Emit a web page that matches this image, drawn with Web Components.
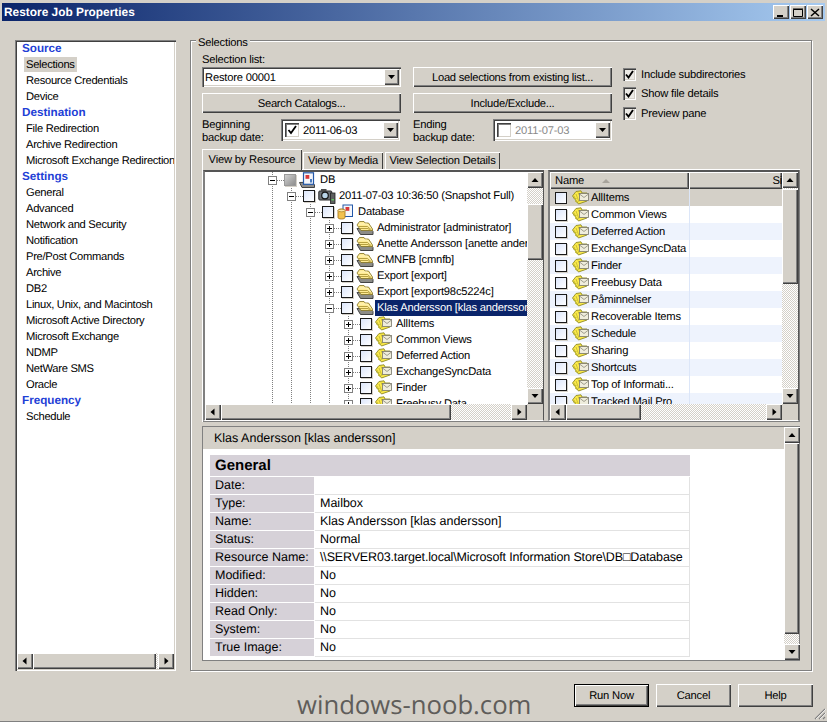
<!DOCTYPE html>
<html lang="en"><head><meta charset="utf-8"><title>Restore Job Properties</title>
<style>
html,body{margin:0;padding:0;background:#d4d0c8}
body{font:11.2px "Liberation Sans",Arial,sans-serif;letter-spacing:-.2px;color:#000;width:827px;height:722px;overflow:hidden;text-rendering:geometricPrecision}
</style></head><body>
<x-dialog>
  <x-titlebar slot="title">Restore Job Properties</x-titlebar>
  <x-nav slot="nav">
    <x-nav-head>Source</x-nav-head>
    <x-nav-item selected>Selections</x-nav-item>
    <x-nav-item>Resource Credentials</x-nav-item>
    <x-nav-item>Device</x-nav-item>
    <x-nav-head>Destination</x-nav-head>
    <x-nav-item>File Redirection</x-nav-item>
    <x-nav-item>Archive Redirection</x-nav-item>
    <x-nav-item>Microsoft Exchange Redirection</x-nav-item>
    <x-nav-head>Settings</x-nav-head>
    <x-nav-item>General</x-nav-item>
    <x-nav-item>Advanced</x-nav-item>
    <x-nav-item>Network and Security</x-nav-item>
    <x-nav-item>Notification</x-nav-item>
    <x-nav-item>Pre/Post Commands</x-nav-item>
    <x-nav-item>Archive</x-nav-item>
    <x-nav-item>DB2</x-nav-item>
    <x-nav-item>Linux, Unix, and Macintosh</x-nav-item>
    <x-nav-item>Microsoft Active Directory</x-nav-item>
    <x-nav-item>Microsoft Exchange</x-nav-item>
    <x-nav-item>NDMP</x-nav-item>
    <x-nav-item>NetWare SMS</x-nav-item>
    <x-nav-item>Oracle</x-nav-item>
    <x-nav-head>Frequency</x-nav-head>
    <x-nav-item>Schedule</x-nav-item>
  </x-nav>
  <x-selections slot="main"></x-selections>
  <x-btn slot="footer" default>Run Now</x-btn>
  <x-btn slot="footer">Cancel</x-btn>
  <x-btn slot="footer">Help</x-btn>
</x-dialog>
<script>
const RAISED='box-shadow:inset 1px 1px #fff,inset -1px -1px #404040,inset -2px -2px #808080;';
const SUNKEN='box-shadow:inset 1px 1px #808080,inset 2px 2px #404040,inset -1px -1px #fff,inset -2px -2px #d4d0c8;';
function def(name,css,html,init){
  customElements.define(name,class extends HTMLElement{
    constructor(){super();this.attachShadow({mode:'open'});}
    connectedCallback(){
      if(this._d)return;this._d=1;
      const h=typeof html==='function'?html(this):html;
      this.shadowRoot.innerHTML='<style>'+css+'</style>'+h;
      if(init)init(this);
    }
  });
}
const ICONS={
 stack:`<path d="M1 8.500L4.500 14.500H17V11.500L14 8z" fill="#8c8c87" stroke="#444" stroke-width="1"/>
  <path d="M1 5L3.500 1.500H8L9 3h3.500L16.500 9v1.500H5z" fill="#ffeb93" stroke="#80701f" stroke-width=".8"/>
  <path d="M2.500 6.500H11.500L15.500 10M3.500 8.500H12L15 11" fill="none" stroke="#a58e2c" stroke-width=".8"/>
  <path d="M3 4h8l3.500 4" fill="none" stroke="#fff8cc" stroke-width=".8"/>`,
 mail:`<path d="M.5 6L4 1.500L9 .8L10 3h5v8l-8.500 3z" fill="#fbe94a" stroke="#8f8a22" stroke-width=".9"/>
  <path d="M2 6l3 7M4 4l3 8M6 2.500l1.500 3M1.500 8.500h3M3 11.500h2.500" stroke="#bdb530" stroke-width=".8" fill="none"/>
  <rect x="7.500" y="3.500" width="9" height="7" fill="#efeddc" stroke="#77756a" stroke-width=".8"/>
  <path d="M7.500 4l4.500 3.500L16.500 4" fill="none" stroke="#8a8878" stroke-width=".8"/>`,
 server:`<path d="M.5 10.500l2.500 5h12.500v-2.500l-2-3z" fill="#8d8d8d" stroke="#333" stroke-width=".9"/>
  <rect x="4.500" y=".8" width="10" height="11.500" fill="#f4f6fb" stroke="#2358a8" stroke-width="1.200"/>
  <rect x="6.500" y="3" width="3.800" height="3.800" fill="#d8383a"/><rect x="11" y="7" width="2" height="3.500" fill="#4a7cc0"/>`,
 camera:`<rect x=".8" y="3" width="13" height="9" rx="1" fill="#6d7176" stroke="#2a2a2a" stroke-width="1"/>
  <rect x="3" y="1" width="5.500" height="2.500" fill="#4b4b4b"/>
  <circle cx="7" cy="7.500" r="3.300" fill="#b9d4e8" stroke="#151515" stroke-width="1.200"/>
  <rect x="12.500" y="5" width="4.500" height="10.500" fill="#5d5f5f" stroke="#222" stroke-width=".8"/>
  <rect x="13.500" y="11" width="2.500" height="1.500" fill="#5fc25f"/>`,
 database:`<rect x="6" y="1" width="9.500" height="11.500" fill="#f4f6fb" stroke="#2358a8"/>
  <rect x="8.500" y="3" width="3.800" height="3.800" fill="#d8383a"/>
  <path d="M1 6.500c0-2 7-2 7 0v7c0 2-7 2-7 0z" fill="#f2c14e" stroke="#a87a20" stroke-width=".9"/>
  <ellipse cx="4.500" cy="6.500" rx="3.500" ry="1.300" fill="#fbe9a8" stroke="#a87a20" stroke-width=".7"/>`
};
def('x-icon',':host{display:block;width:18px;height:16px;flex:none}svg{display:block}',
  e=>`<svg width="18" height="16" viewBox="0 0 18 16" aria-hidden="true">${ICONS[e.getAttribute('name')]||''}</svg>`);

def('x-dialog',`:host{display:flex;flex-direction:column;width:827px;height:722px;box-sizing:border-box;padding-top:3px;border-bottom:1px solid #808080;position:relative;background:#d4d0c8}
 .main{display:flex;gap:14px;margin:19px 0 0 15px;height:631px}
 .foot{display:flex;gap:7px;justify-content:flex-end;margin:13px 14px 0 0}
 .wm{position:absolute;left:297px;top:689px;font:25.700px/32px "Open Sans",sans-serif;letter-spacing:0;color:#5f5d5a;white-space:nowrap}
 svg{position:absolute;right:1px;bottom:1px}`,
 `<slot name="title"></slot><div class="main"><slot name="nav"></slot><slot name="main"></slot></div>
  <div class="foot"><slot name="footer"></slot></div>
  <div class="wm">windows-noob.com</div>
  <svg width="12" height="12" viewBox="0 0 12 12" aria-hidden="true"><path d="M11 1L1 11M11 5L5 11M11 9L9 11" stroke="#808080" stroke-width="1.200"/><path d="M12 1L2 11M12 5L6 11" stroke="#fff" stroke-width=".7"/></svg>`);

def('x-titlebar',`:host{display:flex;align-items:center;justify-content:space-between;height:18px;margin:0 2px;background:linear-gradient(90deg,#0a246a,#a6caf0);color:#fff;font:bold 11.900px "Liberation Sans",sans-serif;letter-spacing:0;padding:0 2px;box-sizing:border-box}
 .b{display:flex}.w{display:flex;width:16px;height:14px;background:#d4d0c8;${RAISED}align-items:center;justify-content:center}
 .w+.w{margin-left:1px}`,
 `<slot></slot><div class="b">
 <span class="w"><svg width="10" height="9"><path d="M1 8h6" stroke="#000" stroke-width="2"/></svg></span>
 <span class="w"><svg width="10" height="9"><path d="M.5 1.500h9v7h-9z" fill="none" stroke="#000"/><path d="M0 1h10" stroke="#000"/></svg></span>
 <span class="w"><svg width="10" height="9"><path d="M1 1l8 7M9 1L1 8" stroke="#000" stroke-width="1.500"/></svg></span></div>`);

def('x-scroll',`:host{display:flex;background:#d4d0c8}
 :host([v]){flex-direction:column;width:16px}
 :host(:not([v])){height:16px}
 .btn{flex:none;width:16px;height:16px;background:#d4d0c8;${RAISED}display:flex;align-items:center;justify-content:center}
 .tr{background:repeating-conic-gradient(#fff 0 25%,#d4d0c8 0 50%) 0 0/2px 2px}
 .end{flex:1}
 .th{flex:none;background:#d4d0c8;${RAISED}}`,
 e=>{const v=e.hasAttribute('v'),s=+e.getAttribute('start')||0,t=+e.getAttribute('thumb')||0;
   const d=v?'height':'width';
   const a=(p)=>`<span class="btn"><svg width="8" height="8" viewBox="0 0 8 8"><path d="${p}"/></svg></span>`;
   return a(v?'M4 2l3.500 4h-7z':'M5.500 .5v7L1.500 4z')+
   `<div class="tr" style="${d}:${s}px;flex:none"></div><div class="th" style="${d}:${t}px"></div><div class="tr end"></div>`+
   a(v?'M.5 2h7L4 6z':'M2.500 .5v7L6.500 4z');});

def('x-nav',`:host{display:flex;flex-direction:column;width:161px;height:631px;flex:none;background:#fff;position:relative}
 :host::after{content:"";position:absolute;inset:0;${SUNKEN}pointer-events:none}
 .l{flex:1;overflow:hidden;padding-right:2px}
 x-scroll{margin:0 2px 2px}`,
 `<div class="l"><slot></slot></div><x-scroll start="0" thumb="123"></x-scroll>`);
def('x-nav-head',`:host{display:block;height:16px;line-height:18px;padding-left:7px;font-weight:bold;font-size:11.700px;letter-spacing:0;color:#1f3fd6;white-space:nowrap}`,`<slot></slot>`);
def('x-nav-item',`:host{display:block;height:16px;padding-left:9px;white-space:nowrap;letter-spacing:-.3px}
 span{display:inline-block;line-height:17px;height:15px;padding:0 2px;margin-top:1px;vertical-align:top}
 :host([selected]) span{background:#d4d0c8}`,`<span><slot></slot></span>`);

def('x-btn',`:host{display:flex;align-items:center;justify-content:center;box-sizing:border-box;width:75px;height:23px;background:#d4d0c8;${RAISED}white-space:nowrap}
 :host([default]){outline:1px solid #000;outline-offset:-1px;box-shadow:inset 2px 2px #fff,inset -2px -2px #404040,inset -3px -3px #808080}
 :host([wide]){width:199px;height:20px;padding-top:1px;letter-spacing:-.25px}`,`<slot></slot>`);

def('x-combo',`:host{display:flex;align-items:center;height:20px;box-sizing:border-box;background:#fff;${SUNKEN}padding:0 2px 0 3px;white-space:nowrap}
 :host([tall]){height:22px}
 :host([disabled]) .t{color:#8a8a8a}
 .t{flex:1;padding-top:1px}
 .c{width:14px;height:14px;flex:none;margin:0 4px 0 1px;box-sizing:border-box;background:#fff;box-shadow:inset 1px 1px #404040,inset 2px 2px #808080,inset -1px -1px #d4d0c8;display:flex;align-items:center;justify-content:center}
 .btn{flex:none;width:15px;height:16px;background:#d4d0c8;${RAISED}display:flex;align-items:center;justify-content:center}`,
 e=>(e.hasAttribute('check')?`<span class="c">${e.getAttribute('check')==='on'?'<svg width="10" height="10"><path d="M1.500 5l2.500 3 5-7" fill="none" stroke="#000" stroke-width="1.800"/></svg>':''}</span>`:'')+
 `<span class="t"><slot></slot></span><span class="btn"><svg width="9" height="6"><path d="M1 1h7L4.500 5z"/></svg></span>`);

def('x-check',`:host{display:flex;align-items:center;height:13px;white-space:nowrap}
 .c{width:13px;height:13px;box-sizing:border-box;margin-right:5px;background:#eceae5;${SUNKEN}display:flex;align-items:center;justify-content:center}`,
 `<span class="c"><svg width="9" height="9"><path d="M1 4.500l2.500 3 4.500-6.500" fill="none" stroke="#000" stroke-width="1.900"/></svg></span><slot></slot>`);

def('x-tabs',`:host{display:flex;align-items:flex-end;height:20px;margin-top:8px}`,`<slot></slot>`);
def('x-tab',`:host{display:flex;align-items:center;justify-content:center;height:17px;background:#d4d0c8;box-shadow:inset 1px 1px #fff,inset -1px 0 #404040;white-space:nowrap;margin-right:2px;box-sizing:border-box}
 :host([active]){height:21px;margin:0 1px -1px 0;position:relative;z-index:1}`,`<slot></slot>`);

def('x-cb',`:host{display:block;flex:none;width:12px;height:12px;box-sizing:border-box;border:1px solid #1a1a1a;background:linear-gradient(135deg,#dce6fb,#fff);box-shadow:1px 1px #d4d0c8}
 :host([mixed]){border-color:#9a9a9a;background:linear-gradient(135deg,#d0d0d0,#8e8e8e)}`,``);

def('x-tree-row',`:host{display:flex;height:16px;white-space:nowrap;padding-left:63px}
 .in{flex:none;width:19px;height:16px;background:linear-gradient(#808080 50%,transparent 0) 4px 0/1px 2px repeat-y}
 .ex{flex:none;position:relative;width:16px;height:16px;background:linear-gradient(#808080 50%,transparent 0) 4px 0/1px 2px repeat-y,linear-gradient(90deg,#808080 50%,transparent 0) 9px 8px/2px 1px repeat-x}
 :host([root]) .ex{background:linear-gradient(#808080 50%,transparent 0) 4px 8px/1px 2px repeat-y,linear-gradient(90deg,#808080 50%,transparent 0) 9px 8px/2px 1px repeat-x;background-size:1px 2px,2px 1px}
 .bx{display:block;box-sizing:border-box;width:9px;height:9px;margin-top:4px;border:1px solid #808080;background:#fff}
 .minus{background:linear-gradient(#000,#000) center/5px 1px no-repeat #fff}
 .plus{background:linear-gradient(#000,#000) center/5px 1px no-repeat,linear-gradient(#000,#000) center/1px 5px no-repeat,#fff}
 x-cb{margin-top:2px}
 x-icon{margin:0 1px 0 3px}
 .t{line-height:16px;padding:0 1px 0 2px;flex:1;overflow:hidden}
 :host([selected]) .t{background:#0a246a;color:#fff}`,
 e=>{const L=+e.getAttribute('level')||0;const x=e.getAttribute('exp');
  return '<span class="in"></span>'.repeat(L)+`<span class="ex"><span class="bx ${x==='-'?'minus':'plus'}"></span></span>`+
  `<x-cb ${e.hasAttribute('root')?'mixed':''}></x-cb><x-icon name="${e.getAttribute('icon')}"></x-icon><span class="t"><slot></slot></span>`;});

def('x-tree',`:host{display:grid;grid-template:1fr 16px/1fr 16px;width:341px;height:251px;box-sizing:border-box;background:#fff;border-style:solid;border-width:2px 1px 1px 2px;border-color:#555 #555 #fff #808080;flex:none}
 .v{overflow:hidden;grid-area:1/1}
 x-scroll[v]{grid-area:1/2}
 .c{background:#d4d0c8}`,
 `<div class="v"><slot></slot></div><x-scroll v start="16" thumb="56"></x-scroll><x-scroll start="0" thumb="230"></x-scroll><div class="c"></div>`);

def('x-list-row',`:host{display:flex;height:17px;white-space:nowrap;background:#fff}
 :host([alt]){background:#eef3fd}
 :host([selected]){background:#d4d0c8}
 .n{display:flex;box-sizing:border-box;padding-left:5px;align-items:center;overflow:hidden;border-right:1px solid #dce6f8;width:140px;flex:none;height:17px}
 x-icon{margin:0 1px 0 5px}
 .t{line-height:19px;align-self:flex-start}`,
 e=>`<div class="n"><x-cb></x-cb><x-icon name="mail"></x-icon><span class="t"><slot></slot></span></div>`);

def('x-list',`:host{display:grid;grid-template:1fr 16px/1fr 16px;width:251px;height:251px;box-sizing:border-box;background:#fff;border-style:solid;border-width:2px 1px 1px 2px;border-color:#555 #555 #fff #808080;flex:none;margin-left:4px}
 .v{display:flex;flex-direction:column;overflow:hidden;grid-area:1/1;min-width:0}
 .h{display:flex;height:17px;flex:none}
 .hc{background:#d4d0c8;${RAISED}display:flex;align-items:center;height:17px;overflow:hidden;box-sizing:border-box;padding-left:5px}
 .a{width:139px}.b{flex:1;justify-content:flex-end;padding:0}
 .c{background:#d4d0c8}
 .rows{flex:1;overflow:hidden}
 svg{margin-left:17px}`,
 `<div class="v"><div class="h"><div class="hc a">Name<svg width="10" height="6"><path d="M1 5h8L5 1z" fill="#a8a49c"/></svg></div><div class="hc b">Si</div></div><div class="rows"><slot></slot></div></div>
 <x-scroll v start="1" thumb="95"></x-scroll><x-scroll start="0" thumb="75"></x-scroll><div class="c"></div>`);

def('x-prop',`:host{display:flex;height:18px;font-size:12.500px;letter-spacing:0;white-space:nowrap}
 .k{width:104px;height:17px;line-height:17px;padding-left:5px;box-sizing:border-box;background:#d6d1d8;flex:none}
 .v{flex:1;margin-left:1px;height:18px;line-height:17px;padding-left:5px;box-sizing:border-box;border-bottom:1px solid #e2e2e2;border-right:1px solid #e2e2e2;overflow:hidden}`,
 e=>`<div class="k">${e.getAttribute('k')}</div><div class="v"><slot></slot></div>`);

def('x-details',`:host{display:flex;width:598px;height:235px;margin-top:4px;box-sizing:border-box;border:1px solid #808080;letter-spacing:0}
 .m{flex:1;display:flex;flex-direction:column;min-width:0}
 .h{height:22px;line-height:22px;padding-left:11px;font-size:12.500px;flex:none}
 .b{flex:1;background:#fff;padding:6px 0 0 7px}
 .t{width:480px}
 .g{height:21px;line-height:21px;padding-left:5px;background:#d6d1d8;font:bold 15px/21px "Liberation Sans",sans-serif;margin-bottom:1px}
 x-scroll{width:15px}`,
 `<div class="m"><div class="h">Klas Andersson [klas andersson]</div><div class="b"><div class="t"><div class="g">General</div><slot></slot></div></div></div>
 <x-scroll v start="0" thumb="191"></x-scroll>`);

def('x-selections',`:host{display:block;position:relative;width:622px;height:631px;box-sizing:border-box;border:1px solid #808080;box-shadow:1px 1px #fff,inset 1px 1px #fff;padding:12px 11px 0}
 .lg{position:absolute;left:5px;top:-5px;background:#d4d0c8;padding:0 2px;line-height:14px}
 .top{display:flex}
 .grid{display:grid;grid-template-columns:199px 199px;column-gap:12px;width:410px}
 .lab{grid-column:1/3;height:14px;line-height:15px}
 .r2{margin-top:6px}
 .date{display:flex;margin-top:6px;height:22px}
 .date .l{width:79px;flex:none;line-height:13px}
 .date x-combo{flex:1}
 .date.d2{margin-right:1px}
 .opts{margin-left:11px;padding-top:15px}
 x-check+x-check{margin-top:6px}
 x-check.p{margin-top:7px}
 .pane{display:flex;width:598px;height:253px;box-sizing:border-box;padding:1px 0 0 1px;box-shadow:inset 1px 1px #fff,inset -1px -1px #808080}`,
 `<span class="lg">Selections</span>
 <div class="top"><div class="grid">
  <div class="lab">Selection list:</div>
  <x-combo>Restore 00001</x-combo><x-btn wide>Load selections from existing list...</x-btn>
  <x-btn wide class="r2">Search Catalogs...</x-btn><x-btn wide class="r2">Include/Exclude...</x-btn>
  <div class="date d2"><div class="l">Beginning<br>backup date:</div><x-combo tall check="on">2011-06-03</x-combo></div>
  <div class="date"><div class="l" style="width:80px">Ending<br>backup date:</div><x-combo tall disabled check="off">2011-07-03</x-combo></div>
 </div>
 <div class="opts"><x-check>Include subdirectories</x-check><x-check>Show file details</x-check><x-check class="p">Preview pane</x-check></div></div>
 <x-tabs><x-tab active style="width:100px">View by Resource</x-tab><x-tab style="width:80px">View by Media</x-tab><x-tab style="width:115px">View Selection Details</x-tab></x-tabs>
 <div class="pane">
  <x-tree>
   <x-tree-row root level="0" exp="-" icon="server">DB</x-tree-row>
   <x-tree-row level="1" exp="-" icon="camera">2011-07-03 10:36:50 (Snapshot Full)</x-tree-row>
   <x-tree-row level="2" exp="-" icon="database">Database</x-tree-row>
   <x-tree-row level="3" exp="+" icon="stack">Administrator [administrator]</x-tree-row>
   <x-tree-row level="3" exp="+" icon="stack">Anette Andersson [anette andersson]</x-tree-row>
   <x-tree-row level="3" exp="+" icon="stack">CMNFB [cmnfb]</x-tree-row>
   <x-tree-row level="3" exp="+" icon="stack">Export [export]</x-tree-row>
   <x-tree-row level="3" exp="+" icon="stack">Export [export98c5224c]</x-tree-row>
   <x-tree-row level="3" exp="-" icon="stack" selected>Klas Andersson [klas andersson]</x-tree-row>
   <x-tree-row level="4" exp="+" icon="mail">AllItems</x-tree-row>
   <x-tree-row level="4" exp="+" icon="mail">Common Views</x-tree-row>
   <x-tree-row level="4" exp="+" icon="mail">Deferred Action</x-tree-row>
   <x-tree-row level="4" exp="+" icon="mail">ExchangeSyncData</x-tree-row>
   <x-tree-row level="4" exp="+" icon="mail">Finder</x-tree-row>
   <x-tree-row level="4" exp="+" icon="mail">Freebusy Data</x-tree-row>
  </x-tree>
  <x-list>
   <x-list-row selected>AllItems</x-list-row><x-list-row>Common Views</x-list-row><x-list-row alt>Deferred Action</x-list-row>
   <x-list-row>ExchangeSyncData</x-list-row><x-list-row alt>Finder</x-list-row><x-list-row>Freebusy Data</x-list-row>
   <x-list-row alt>Påminnelser</x-list-row><x-list-row>Recoverable Items</x-list-row><x-list-row alt>Schedule</x-list-row>
   <x-list-row>Sharing</x-list-row><x-list-row alt>Shortcuts</x-list-row><x-list-row>Top of Informati...</x-list-row>
   <x-list-row alt>Tracked Mail Pro</x-list-row>
  </x-list>
 </div>
 <x-details>
  <x-prop k="Date:"></x-prop><x-prop k="Type:">Mailbox</x-prop><x-prop k="Name:">Klas Andersson [klas andersson]</x-prop>
  <x-prop k="Status:">Normal</x-prop><x-prop k="Resource Name:"><span style="letter-spacing:-.15px">\\\\SERVER03.target.local\\Microsoft Information Store\\DB□Database</span></x-prop>
  <x-prop k="Modified:">No</x-prop><x-prop k="Hidden:">No</x-prop><x-prop k="Read Only:">No</x-prop><x-prop k="System:">No</x-prop><x-prop k="True Image:">No</x-prop>
 </x-details>`);
</script>
</body></html>
